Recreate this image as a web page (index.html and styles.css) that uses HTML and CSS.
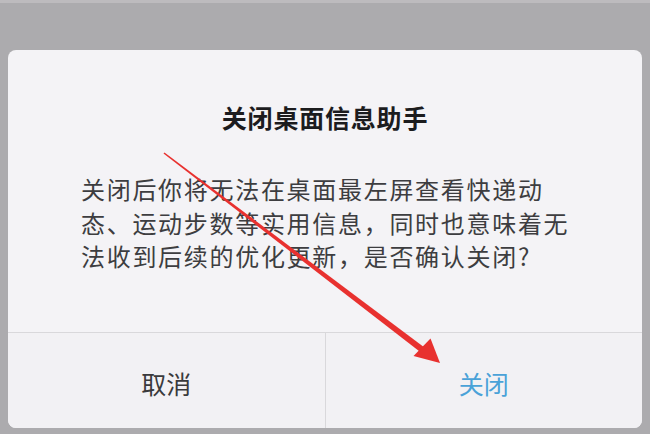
FILE: index.html
```html
<!DOCTYPE html>
<html lang="zh">
<head>
<meta charset="utf-8">
<link rel="stylesheet" href="styles.css">
</head>
<body>
<div class="screen">
  <div class="dialog">
    <div class="title">关闭桌面信息助手</div>
    <div class="message">关闭后你将无法在桌面最左屏查看快递动<br>态、运动步数等实用信息，同时也意味着无<br>法收到后续的优化更新，是否确认关闭?</div>
    <div class="actions">
      <div class="btn cancel">取消</div>
      <div class="btn confirm">关闭</div>
    </div>
  </div>
  <svg class="arrow" width="650" height="434" viewBox="0 0 650 434">
    <polygon points="164.5,152.4 163.5,153.6 422.2,353.4 425.8,348.6" fill="#e8312f"/>
    <polygon points="440,363 413.5,356 430.5,338.5" fill="#e8312f"/>
  </svg>
</div>
</body>
</html>
```
FILE: styles.css
```css
html, body {
  margin: 0;
  padding: 0;
}
body {
  width: 650px;
  height: 434px;
  overflow: hidden;
  background: #acabae;
  font-family: "Noto Sans CJK SC", "Noto Sans", sans-serif;
}
.screen {
  position: relative;
  box-sizing: border-box;
  width: 650px;
  height: 434px;
  padding: 50px 8px 6px 8px;
  background: linear-gradient(#bdbbbe 0, #bdbbbe 3px, #acabae 3px);
}
.dialog {
  height: 100%;
  background: #f4f3f6;
  border-radius: 8px;
  display: flex;
  flex-direction: column;
  overflow: hidden;
}
.title {
  padding-top: 50px;
  line-height: 34px;
  height: 34px;
  text-align: center;
  font-size: 25px;
  font-weight: 700;
  letter-spacing: 0.8px;
  color: #1c1c1e;
}
.message {
  margin-top: 38px;
  padding-left: 73px;
  font-size: 24px;
  line-height: 33.5px;
  letter-spacing: 1.7px;
  color: #3d3d40;
}
.actions {
  margin-top: auto;
  height: 95px;
  border-top: 1px solid #d9d8db;
  display: flex;
  background: #f2f1f4;
}
.btn {
  flex: 1;
  display: flex;
  align-items: center;
  justify-content: center;
  font-size: 25px;
  padding-top: 4px;
  box-sizing: border-box;
}
.cancel {
  color: #3a3a3c;
  border-right: 1px solid #d9d8db;
}
.confirm {
  color: #4aa2d8;
}
.arrow {
  position: absolute;
  left: 0;
  top: 0;
}
```
